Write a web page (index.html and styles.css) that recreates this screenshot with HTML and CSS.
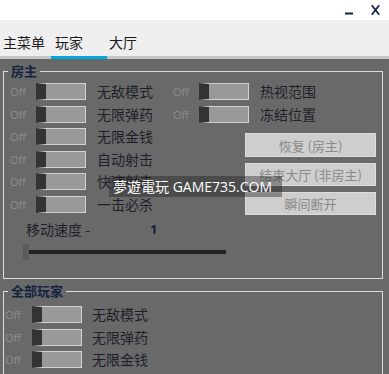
FILE: index.html
```html
<!DOCTYPE html>
<html lang="zh">
<head>
    <meta charset="UTF-8">
    <meta name="viewport" content="width=device-width, initial-scale=1.0">
    <title>玩家</title>
    <link rel="stylesheet" href="styles.css">
</head>
<body>
    <div class="titlebar">
        <svg class="win-btn" width="8" height="20" viewBox="0 0 8 20"><rect x="0" y="12.5" width="8" height="2" fill="#0d2746"/></svg>
        <svg class="win-btn" width="9" height="20" viewBox="0 0 9 20"><path d="M0.8 5.2 L8.2 14.8 M8.2 5.2 L0.8 14.8" stroke="#0d2746" stroke-width="1.8" fill="none"/></svg>
    </div>

    <div class="tabs">
        <div class="tab tab-main">主菜单</div>
        <div class="tab tab-player active">玩家</div>
        <div class="tab tab-lobby">大厅</div>
    </div>

    <div class="panel">
        <fieldset class="group host">
            <legend>房主</legend>
            <div class="host-body">
                <div class="col col-left">
                    <div class="row"><span class="off">Off</span><span class="toggle"></span><span class="label">无敌模式</span></div>
                    <div class="row"><span class="off">Off</span><span class="toggle"></span><span class="label">无限弹药</span></div>
                    <div class="row"><span class="off">Off</span><span class="toggle"></span><span class="label">无限金钱</span></div>
                    <div class="row"><span class="off">Off</span><span class="toggle"></span><span class="label">自动射击</span></div>
                    <div class="row"><span class="off">Off</span><span class="toggle"></span><span class="label">快速射击</span></div>
                    <div class="row"><span class="off">Off</span><span class="toggle"></span><span class="label">一击必杀</span></div>
                    <div class="speed"><span class="speed-label">移动速度 -</span><span class="speed-value">1</span></div>
                    <div class="slider"><span class="thumb"></span><span class="track"></span></div>
                </div>
                <div class="col col-right">
                    <div class="row"><span class="off">Off</span><span class="toggle"></span><span class="label">热视范围</span></div>
                    <div class="row"><span class="off">Off</span><span class="toggle"></span><span class="label">冻结位置</span></div>
                    <div class="buttons">
                        <button class="btn btn-first">恢复 (房主)</button>
                        <button class="btn btn-second">结束大厅 (非房主)</button>
                        <button class="btn btn-third">瞬间断开</button>
                    </div>
                </div>
            </div>
        </fieldset>

        <fieldset class="group everyone">
            <legend>全部玩家</legend>
            <div class="col">
                <div class="row"><span class="off">Off</span><span class="toggle"></span><span class="label">无敌模式</span></div>
                <div class="row"><span class="off">Off</span><span class="toggle"></span><span class="label">无限弹药</span></div>
                <div class="row"><span class="off">Off</span><span class="toggle"></span><span class="label">无限金钱</span></div>
            </div>
        </fieldset>

        <div class="watermark">夢遊電玩 GAME735.COM</div>
    </div>
</body>
</html>
```

FILE: styles.css
```css
body {
    margin: 0;
    font-family: 'Open Sans', 'Noto Sans CJK SC', sans-serif;
    background-color: #696969;
    color: #1f1f29;
    overflow: hidden;
}
.titlebar {
    height: 20px;
    background-color: #fff;
    display: flex;
    justify-content: flex-end;
    align-items: flex-start;
    gap: 18px;
    padding-right: 9px;
}
.win-btn {
    display: block;
}
.tabs {
    display: flex;
    height: 39px;
    background-color: #efefef;
    box-shadow: inset 0 -3px #c6c6c6;
}
.tab {
    box-sizing: border-box;
    height: 39px;
    padding-top: 12px;
    font-family: 'Noto Sans CJK SC', sans-serif;
    font-size: 14px;
    line-height: 20px;
    color: #1c1c1c;
}
.tab-main {
    width: 51px;
    padding-left: 3px;
}
.tab-player {
    width: 56px;
    padding-left: 4px;
}
.tab-lobby {
    padding-left: 2px;
}
.tab.active {
    border-bottom: 3px solid #00a6de;
}
.panel {
    position: relative;
    padding-top: 4px;
    height: 311px;
    overflow: hidden;
}
.group {
    box-sizing: border-box;
    width: 380px;
    margin: 0 0 0 3px;
    border: 1px solid #dcdcdc;
    min-width: 0;
}
.group legend {
    padding: 0 3px;
    font-family: 'Noto Sans CJK SC', sans-serif;
    font-size: 13px;
    font-weight: bold;
    line-height: 16px;
    color: #13233f;
}
.host {
    padding: 4px 0 18px 6px;
}
.host legend {
    margin-left: -2px;
}
.everyone {
    margin-top: 4px;
    padding: 7px 0 20px 1px;
}
.everyone legend {
    margin-left: 3px;
}
.host-body {
    display: flex;
}
.col {
    display: flex;
    flex-direction: column;
    gap: 5.6px;
}
.col-left {
    width: 163px;
}
.col-right {
    gap: 6px;
}
.row {
    display: flex;
    align-items: center;
    height: 17px;
}
.off {
    width: 26px;
    font-size: 11px;
    color: #8d8d8d;
}
.everyone .off {
    width: 27px;
}
.toggle {
    box-sizing: border-box;
    position: relative;
    width: 50px;
    height: 17px;
    background-color: #999;
    border: 1px solid #d2d2d2;
    border-left: 10px solid #333;
}
.label {
    margin-left: 11px;
    font-family: 'Noto Sans CJK SC', sans-serif;
    font-size: 14px;
    line-height: 17px;
    white-space: nowrap;
}
.everyone .label {
    margin-left: 10px;
}
.speed {
    display: flex;
    padding-left: 16px;
    font-family: 'Noto Sans CJK SC', sans-serif;
    font-size: 14px;
    line-height: 20px;
}
.speed-label {
    width: 124px;
}
.speed-value {
    font-family: 'Open Sans', sans-serif;
    font-weight: bold;
    font-size: 13px;
    color: #17233a;
}
.slider {
    display: flex;
    align-items: center;
    margin-left: 13px;
    height: 16px;
}
.thumb {
    flex: none;
    width: 6px;
    height: 16px;
    background-color: #5b5b5b;
}
.track {
    flex: none;
    width: 197px;
    height: 4px;
    background-color: #222;
}
.buttons {
    display: flex;
    flex-direction: column;
    gap: 6px;
    margin-top: 4px;
    margin-left: 72px;
}
.btn {
    box-sizing: border-box;
    width: 131px;
    height: 23px;
    padding: 0;
    background-color: #cecece;
    border: 1px solid #dddddd;
    font-family: 'Noto Sans CJK SC', sans-serif;
    font-size: 13px;
    color: #8a8a8a;
}
.btn-first {
    height: 24px;
}
.watermark {
    position: absolute;
    left: 109px;
    top: 117px;
    width: 173px;
    height: 21px;
    box-sizing: border-box;
    padding-left: 4px;
    background-color: rgba(30, 30, 30, 0.4);
    font-family: 'Open Sans', 'Noto Sans CJK SC', sans-serif;
    font-size: 14px;
    line-height: 21px;
    color: #fff;
    white-space: nowrap;
}
```
